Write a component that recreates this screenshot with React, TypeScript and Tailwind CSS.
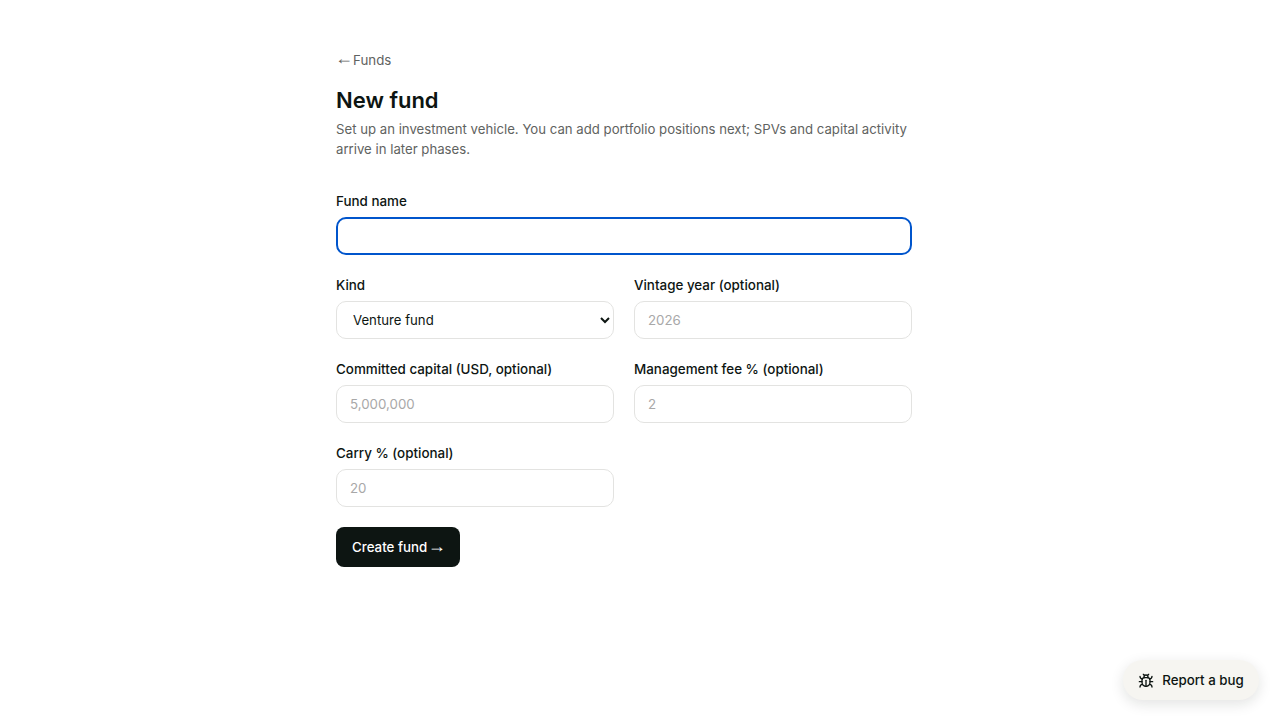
import { Bug } from 'lucide-react';

const labelClass = 'block mb-[6px] text-[13.4px] leading-5 font-medium text-[#0d1512]';
const inputClass =
  'w-full h-[38px] rounded-[10px] border border-[#e3e3e1] bg-white px-[13px] text-[13.3px] text-[#0d1512] placeholder:text-[#a8a8a8] focus:outline-none';

function Field({ label, placeholder }: { label: string; placeholder: string }) {
  return (
    <div>
      <label className={labelClass}>{label}</label>
      <input type="text" placeholder={placeholder} className={inputClass} />
    </div>
  );
}

export default function App() {
  return (
    <div className="relative h-[720px] bg-white pr-8 font-['Inter','Noto_Sans',sans-serif] overflow-hidden">
      <div className="mx-auto w-[576px] pt-[50px]">
        <a className="block text-[13.3px] leading-5 text-[#5f6361] [word-spacing:-3.7px]">
          <span className="-ml-px inline-block -translate-y-px font-['Liberation_Sans'] text-[18px] leading-none">←</span> Funds
        </a>

        <h1 className="mt-[14px] text-[22px] leading-8 font-semibold text-[#0d1512]">New fund</h1>
        <p className="mt-[3px] text-[13.2px] leading-5 text-[#5f6361]">
          Set up an investment vehicle. You can add portfolio positions next; SPVs and capital activity arrive in later phases.
        </p>

        <form className="mt-[32px]">
          <div>
            <label className={labelClass}>Fund name</label>
            <input
              type="text"
              className="w-full h-[38px] rounded-[10px] border-2 border-[#0055cc] bg-white px-[12px] text-sm focus:outline-none"
            />
          </div>

          <div className="mt-[20px] grid grid-cols-2 gap-x-5 gap-y-5">
            <div>
              <label className={labelClass}>Kind</label>
              <select className="w-full h-[38px] rounded-[10px] border border-[#e3e3e1] bg-white px-3 text-[13.2px] text-[#0d1512] focus:outline-none">
                <option>Venture fund</option>
              </select>
            </div>
            <Field label="Vintage year (optional)" placeholder="2026" />
            <Field label="Committed capital (USD, optional)" placeholder="5,000,000" />
            <Field label="Management fee % (optional)" placeholder="2" />
            <Field label="Carry % (optional)" placeholder="20" />
          </div>

          <button
            type="button"
            className="mt-[20px] h-10 w-[124px] rounded-lg bg-[#0d1512] pl-4 text-left text-[13.3px] font-medium text-white"
          >
            Create fund
            <span className="[word-spacing:-3px]"> <span className="inline-block font-['Liberation_Sans'] text-[18px] leading-none font-normal">→</span></span>
          </button>
        </form>
      </div>

      <button
        type="button"
        className="absolute right-[21px] bottom-[20px] flex h-10 w-[136px] items-center justify-center gap-2 rounded-full bg-[#f6f5f1] pt-px text-[13.3px] font-medium text-[#0d1512] shadow-[0_4px_14px_rgba(13,21,18,0.12)]"
      >
        <Bug size={16} strokeWidth={2} />
        Report a bug
      </button>
    </div>
  );
}
